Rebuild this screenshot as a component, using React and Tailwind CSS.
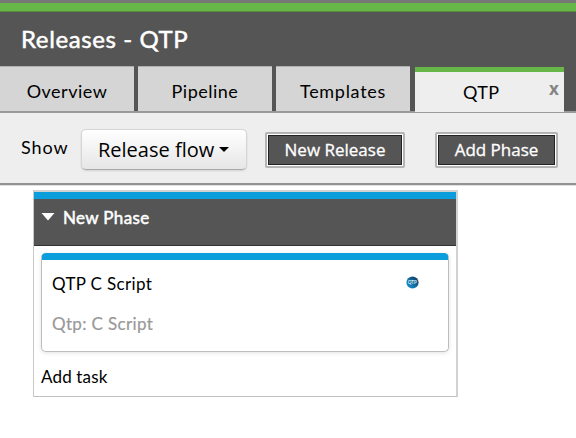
const museo = "font-['Lato','Noto_Sans',sans-serif]";
const open = "font-['Open_Sans','Noto_Sans',sans-serif]";

function Tab({ label, className = '' }) {
  return (
    <div className={`flex h-[45px] w-[134px] shrink-0 items-center justify-center border-t border-[#b0b0b0] bg-[#d5d5d5] pt-1 text-[18px] leading-6 ${className}`}>
      <span className="whitespace-nowrap">{label}</span>
    </div>
  );
}

function DarkButton({ label, className = '' }) {
  return (
    <button className={`h-[36px] shrink-0 rounded-[2px] border-2 border-[#b4b4b4] bg-white p-px ${className}`}>
      <span className={`flex h-full items-center justify-center whitespace-nowrap border border-[#222] bg-[#555] text-[17px] leading-6 text-white [-webkit-text-stroke:0.3px_white] ${open}`}>
        {label}
      </span>
    </button>
  );
}

export default function App() {
  return (
    <div className={`h-[438px] w-[576px] overflow-hidden bg-white text-black ${museo}`}>
      <header className="flex h-[113px] flex-col border-t-[3px] border-[#777] bg-[#555]">
        <div className="h-[9px] shrink-0 border-b border-[#568b42] bg-[#67b748]" />
        <div className="flex h-[54px] shrink-0 items-center pl-[21px] text-[24px] text-white [-webkit-text-stroke:0.5px_white]">
          <h1 className="whitespace-nowrap tracking-[0.6px]">Releases - QTP</h1>
        </div>
        <nav className="flex h-[47px] shrink-0 gap-1 border-b-2 border-[#999]">
          <Tab label="Overview" className="tracking-[0.5px]" />
          <Tab label="Pipeline" className="tracking-[0.5px]" />
          <Tab label="Templates" className="tracking-[0.7px]" />
          <div className="ml-px mt-px flex h-[45px] w-[149px] shrink-0 items-center border-t-[5px] border-[#67b748] bg-[#eee] text-[18px] leading-6">
            <span className="ml-[48px] w-[38px] whitespace-nowrap tracking-[0.4px]">QTP</span>
            <span className={`mb-[6px] ml-[48px] text-[17px] font-bold leading-5 text-[#858585] ${open}`}>x</span>
          </div>
        </nav>
      </header>

      <section className="flex h-[72px] items-start border-b-2 border-[#929292] bg-[#eee] pl-[21px] shadow-[0_1px_0_#e0e0e0]">
        <span className="mt-[22px] w-[60px] shrink-0 whitespace-nowrap text-[18px] leading-6 tracking-[0.9px]">Show</span>
        <button className={`mt-[16px] flex h-[41px] w-[166px] shrink-0 items-center rounded-[5px] border border-[#d5d5d5] border-b-[#aaa] bg-linear-to-b from-white to-[#e6e6e6] pl-[16px] text-[20px] leading-6 shadow-[0_1px_2px_rgba(0,0,0,0.12)] ${open}`}>
          <span className="w-[116px] whitespace-nowrap text-left">Release flow</span>
          <svg className="ml-[5px] h-[5px] w-[10px]" viewBox="0 0 10 5"><path d="M0 0H10L5 5Z" /></svg>
        </button>
        <DarkButton label="New Release" className="ml-[18px] mt-[19px] w-[140px]" />
        <DarkButton label="Add Phase" className="ml-[30px] mt-[19px] w-[123px]" />
      </section>

      <main className="ml-[33px] mt-[5px] h-[207px] w-[425px] border border-r-2 border-t-2 border-[#d2d2d2] border-b-[#c0c0c0] border-l-[#c8c8c8] bg-white">
        <div className="flex h-[54px] items-start border-b border-t-[7px] border-b-[#333] border-t-[#0c9ddd] bg-[#555] pl-[7px] text-white">
          <svg className="mt-[14px] h-[8px] w-[14px]" viewBox="0 0 14 8"><path d="M0.5 0H13.5L7 7.5Z" fill="white" /></svg>
          <h2 className="ml-[8px] mt-[7px] whitespace-nowrap text-[17px] leading-6 tracking-[0.35px] [-webkit-text-stroke:0.5px_white]">New Phase</h2>
        </div>
        <article className="ml-[7px] mt-[7px] flex h-[99px] w-[408px] justify-between overflow-hidden rounded-[5px] border border-t-[7px] border-[#bdbdbd] border-t-[#0c9ddd] bg-white pl-[10px] pr-[29px] shadow-[0_1px_4px_rgba(0,0,0,0.12)]">
          <div className="whitespace-nowrap text-[17px] leading-6 tracking-[0.35px]">
            <p className="mt-[12px]">QTP C Script</p>
            <p className="mt-[16px] text-[#999] [-webkit-text-stroke:0.2px_#999]">Qtp: C Script</p>
          </div>
          <svg className="mt-[16px] h-[13px] w-[13px]" viewBox="0 0 13 13">
            <defs><linearGradient id="orb" x1="0" y1="1" x2="1" y2="0"><stop offset="0" stopColor="#1899d3" /><stop offset="0.5" stopColor="#126b9f" /><stop offset="1" stopColor="#142b55" /></linearGradient></defs>
            <circle cx="6.5" cy="6.5" r="6.1" fill="url(#orb)" />
            <text x="6.3" y="8.3" textAnchor="middle" fontSize="4.6" fontWeight="700" fill="#d8edf7">QTP</text>
          </svg>
        </article>
        <p className="ml-[7px] mt-[13px] whitespace-nowrap text-[17px] leading-6 tracking-[0.15px]">Add task</p>
      </main>
    </div>
  );
}
